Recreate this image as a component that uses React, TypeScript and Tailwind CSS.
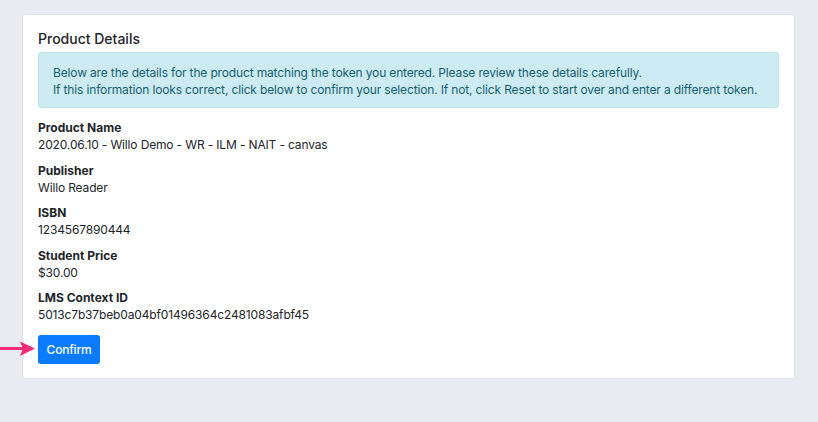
export default function App() {
  const details = [
    { label: "Product Name", value: "2020.06.10 - Willo Demo - WR - ILM - NAIT - canvas" },
    { label: "Publisher", value: "Willo Reader" },
    { label: "ISBN", value: "1234567890444" },
    { label: "Student Price", value: "$30.00" },
    { label: "LMS Context ID", value: "5013c7b37beb0a04bf01496364c2481083afbf45" },
  ];

  return (
    <div
      className="relative min-h-screen bg-[#e8ebf2] pt-[14px] pl-[22px] pr-[23px] text-[#212529]"
      style={{ fontFamily: "Inter, 'Liberation Sans', sans-serif" }}
    >
      <div className="bg-white border border-[#dfe2e8] rounded-[3px] px-[15px] pt-[14px] pb-[14px]">
        <h2 className="text-[14px] leading-[20px] font-medium mb-[3px]">Product Details</h2>

        {/* Info alert */}
        <div className="bg-[#cdebf3] border border-[#bfe3ec] rounded-[3px] text-[#17606e] text-[12px] leading-[17px] tracking-[-0.15px] pl-[14px] pr-[10px] pt-[11px] pb-[9px]">
          <p>Below are the details for the product matching the token you entered. Please review these details carefully.</p>
          <p>If this information looks correct, click below to confirm your selection. If not, click Reset to start over and enter a different token.</p>
        </div>

        <dl className="mt-[11px] flex flex-col gap-[8.5px] text-[12px] leading-[17px]">
          {details.map((d) => (
            <div key={d.label}>
              <dt className="font-bold">{d.label}</dt>
              <dd className="tracking-[-0.15px]">{d.value}</dd>
            </div>
          ))}
        </dl>

        <div className="relative mt-[12px]">
          <button className="bg-[#0a7bff] text-white text-[12px] tracking-[-0.2px] font-medium rounded-[3px] w-[62px] h-[29px]">
            Confirm
          </button>
          {/* annotation arrow */}
          <svg
            className="absolute left-[-38px] top-[6px]"
            width="36"
            height="17"
            viewBox="0 0 36 17"
          >
            <line x1="0" y1="7.5" x2="24" y2="7.5" stroke="#f52a78" strokeWidth="3" />
            <path d="M20 0.5 L35 7.5 L20 15 L23 7.5 Z" fill="#f52a78" />
          </svg>
        </div>
      </div>
    </div>
  );
}
